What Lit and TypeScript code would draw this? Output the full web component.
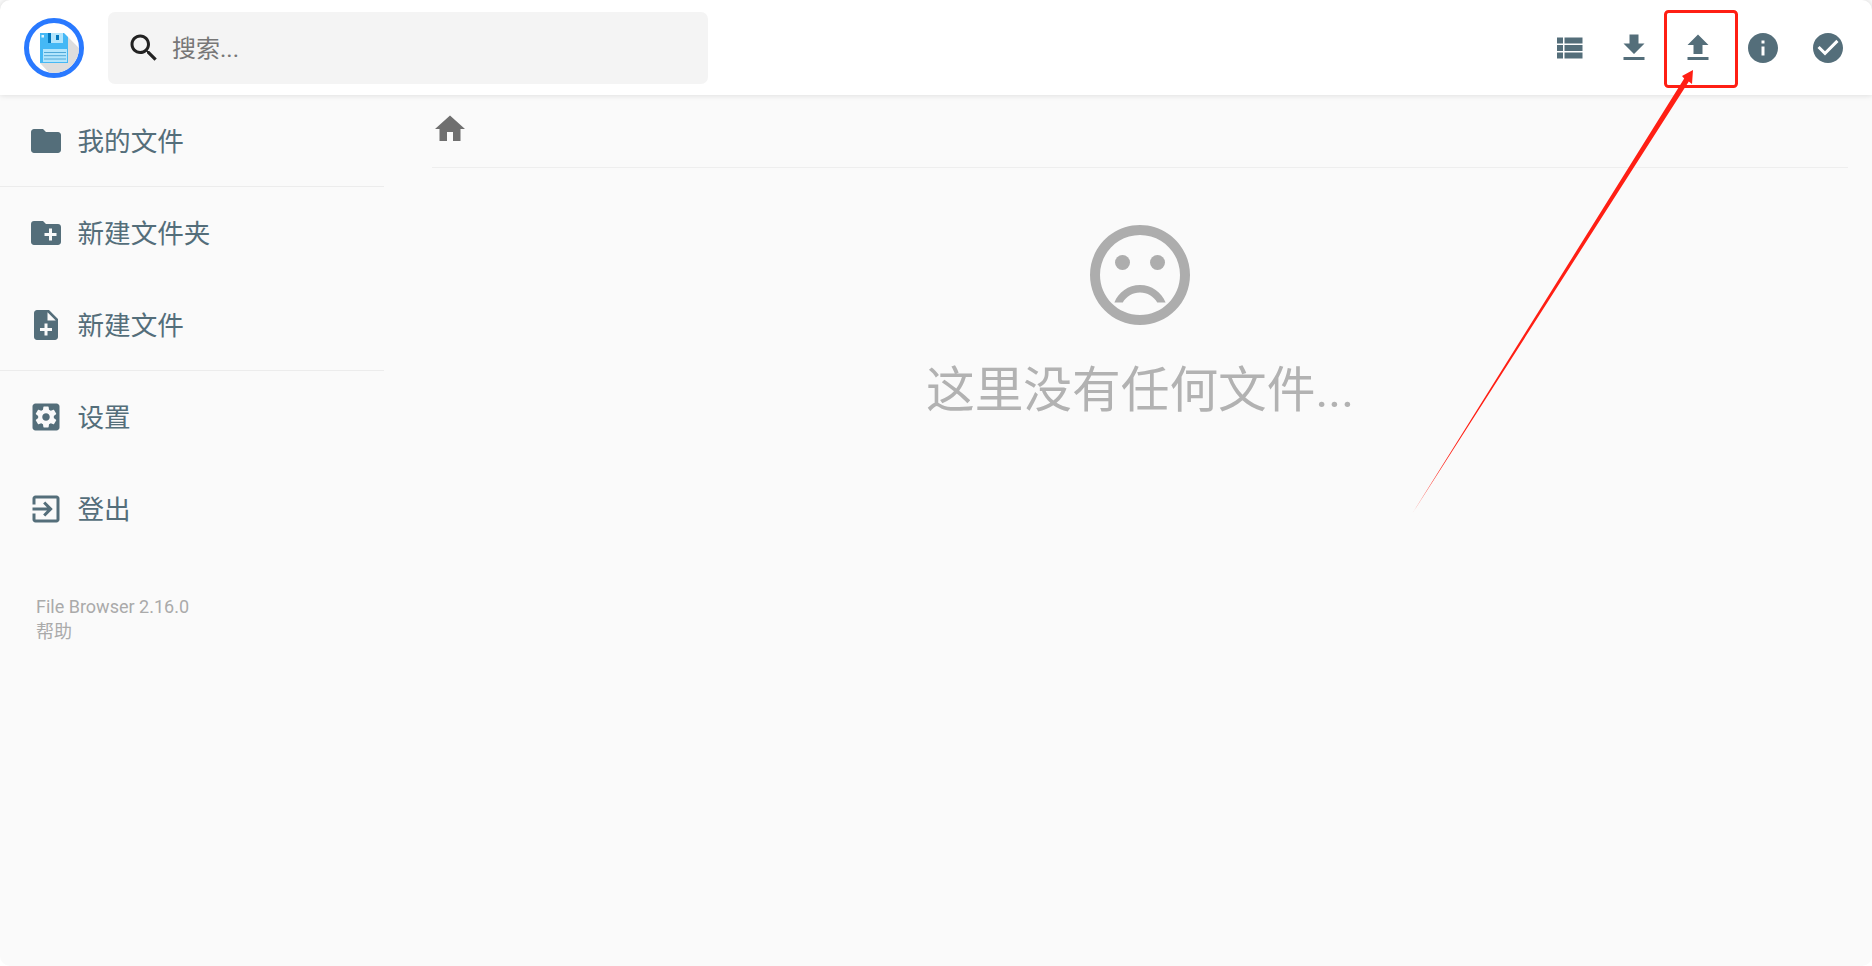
import { LitElement, html, css, svg } from "lit";
import { customElement } from "lit/decorators.js";

const ic = (body: unknown, cls = "") => html`<svg class="ic ${cls}" viewBox="0 0 24 24" fill="currentColor">${body}</svg>`;

const P = {
  search: svg`<path d="M15.5 14h-.79l-.28-.27C15.41 12.59 16 11.11 16 9.5 16 5.91 13.09 3 9.5 3S3 5.91 3 9.5 5.91 16 9.5 16c1.61 0 3.09-.59 4.23-1.57l.27.28v.79l5 4.99L20.49 19l-4.99-5zm-6 0C7.01 14 5 11.99 5 9.5S7.01 5 9.5 5 14 7.01 14 9.5 11.99 14 9.5 14z"/>`,
  list: svg`<path d="M4 14h4v-4H4v4zm0 5h4v-4H4v4zM4 9h4V5H4v4zm5 5h12v-4H9v4zm0 5h12v-4H9v4zM9 5v4h12V5H9z"/>`,
  down: svg`<path d="M19 9h-4V3H9v6H5l7 7 7-7zM5 18v2h14v-2H5z"/>`,
  up: svg`<path d="M9 16h6v-6h4l-7-7-7 7h4zm-4 2h14v2H5z"/>`,
  info: svg`<path d="M12 2C6.48 2 2 6.48 2 12s4.48 10 10 10 10-4.48 10-10S17.52 2 12 2zm1 15h-2v-6h2v6zm0-8h-2V7h2v2z"/>`,
  check: svg`<path d="M12 2C6.48 2 2 6.48 2 12s4.48 10 10 10 10-4.48 10-10S17.52 2 12 2zm-2 15l-5-5 1.41-1.41L10 14.17l7.59-7.59L19 8l-9 9z"/>`,
  folder: svg`<path d="M10 4H4c-1.1 0-1.99.9-1.99 2L2 18c0 1.1.9 2 2 2h16c1.1 0 2-.9 2-2V8c0-1.1-.9-2-2-2h-8l-2-2z"/>`,
  newFolder: svg`<path d="M20 6h-8l-2-2H4c-1.11 0-1.99.89-1.99 2L2 18c0 1.11.89 2 2 2h16c1.11 0 2-.89 2-2V8c0-1.11-.89-2-2-2zm-1 8h-3v3h-2v-3h-3v-2h3V9h2v3h3v2z"/>`,
  newFile: svg`<path d="M14 2H6c-1.1 0-1.99.9-1.99 2L4 20c0 1.1.89 2 1.99 2H18c1.1 0 2-.9 2-2V8l-6-6zm2 14h-3v3h-2v-3H8v-2h3v-3h2v3h3v2zm-3-7V3.5L18.5 9H13z"/>`,
  settings: svg`<path d="M19 3H5c-1.11 0-2 .9-2 2v14c0 1.1.89 2 2 2h14c1.11 0 2-.9 2-2V5c0-1.1-.89-2-2-2zm-1.75 9c0 .23-.02.46-.05.68l1.48 1.16c.13.11.17.3.08.45l-1.4 2.42c-.09.15-.27.21-.43.15l-1.74-.7c-.36.28-.76.51-1.18.69l-.26 1.85c-.03.17-.18.3-.35.3h-2.8c-.17 0-.32-.13-.35-.29l-.26-1.85c-.43-.18-.82-.41-1.18-.69l-1.74.7c-.16.06-.34 0-.43-.15l-1.4-2.42c-.09-.15-.05-.34.08-.45l1.48-1.16c-.03-.23-.05-.46-.05-.69 0-.23.02-.46.05-.68l-1.48-1.16c-.13-.11-.17-.3-.08-.45l1.4-2.42c.09-.15.27-.21.43-.15l1.74.7c.36-.28.76-.51 1.18-.69l.26-1.85c.03-.17.18-.3.35-.3h2.8c.17 0 .32.13.35.29l.26 1.85c.43.18.82.41 1.18.69l1.74-.7c.16-.06.34 0 .43.15l1.4 2.42c.09.15.05.34-.08.45l-1.48 1.16c.03.23.05.46.05.69zM12 9.500c-1.38 0-2.5 1.12-2.5 2.5s1.12 2.5 2.5 2.5 2.5-1.12 2.5-2.5-1.12-2.5-2.5-2.5z"/>`,
  logout: svg`<path d="M10.09 15.59L11.5 17l5-5-5-5-1.41 1.41L12.67 11H3v2h9.67l-2.58 2.59zM19 3H5c-1.11 0-2 .9-2 2v4h2V5h14v14H5v-4H3v4c0 1.1.89 2 2 2h14c1.1 0 2-.9 2-2V5c0-1.1-.9-2-2-2z"/>`,
  home: svg`<path d="M10 20v-6h4v6h5v-8h3L12 3 2 12h3v8z"/>`,
  sad: svg`<circle cx="15.5" cy="9.5" r="1.5"/><circle cx="8.5" cy="9.5" r="1.5"/><path d="M12 14c-2.33 0-4.32 1.45-5.12 3.5h1.67c.69-1.19 1.97-2 3.45-2s2.75.81 3.45 2h1.67c-.8-2.05-2.79-3.5-5.12-3.5zm-.01-12C6.47 2 2 6.48 2 12s4.47 10 9.99 10C17.52 22 22 17.52 22 12S17.52 2 11.99 2zM12 20c-4.42 0-8-3.58-8-8s3.58-8 8-8 8 3.58 8 8-3.58 8-8 8z"/>`,
};

@customElement("app-root")
export class AppRoot extends LitElement {
  static styles = css`
    :host {
      display: block;
      width: 1872px;
      height: 966px;
      overflow: hidden;
      position: relative;
      background: #fff;
      font-family: Roboto, "Noto Sans CJK SC", sans-serif;
      color: #546e7a;
    }
    * { box-sizing: border-box; }
    .frame { height: 966px; background: #fafafa; border-radius: 0 0 10px 10px; overflow: hidden; }
    .ic { width: 36px; height: 36px; display: block; flex: none; }
    header {
      height: 95px;
      background: #fff;
      display: flex;
      align-items: center;
      padding: 0 26px 0 24px;
      box-shadow: 0 0 6px rgba(0, 0, 0, 0.14);
      position: relative;
      border-radius: 10px 10px 0 0;
    }
    .logo { width: 60px; height: 60px; display: block; flex: none; }
    .search {
      margin-left: 24px;
      width: 600px;
      height: 72px;
      background: #f4f4f4;
      border-radius: 7px;
      display: flex;
      align-items: center;
      padding-left: 17.5px;
      gap: 10.5px;
      color: #222;
    }
    .search span { font-size: 24px; color: #777; padding-bottom: 2px; }
    .actions { margin-left: auto; display: flex; gap: 28.8px; }
    .body { display: flex; }
    nav { width: 384px; flex: none; }
    .item {
      height: 92px;
      display: flex;
      align-items: center;
      gap: 14px;
      padding-left: 27.5px;
      font-size: 26.6px;
    }
    .item span { padding-bottom: 3px; }
    .sep { border-bottom: 1px solid #ececec; }
    .foot { margin-top: 39px; padding-left: 36px; font-size: 18px; line-height: 25px; color: #aaa; }
    main { flex: 1; padding: 0 24px 0 48px; }
    .crumb { height: 73px; border-bottom: 1px solid #eee; color: #6f6f6f; padding-top: 16px; }
    .empty { display: flex; flex-direction: column; align-items: center; color: #b2b2b2; padding-top: 47px; }
    .empty .ic { width: 120px; height: 120px; color: #adadad; }
    .empty p { margin: 22px 0 0; font-size: 48.7px; line-height: 68px; font-weight: 400; }
    .mark { position: absolute; left: 0; top: 0; width: 1872px; height: 966px; pointer-events: none; }
  `;

  render() {
    return html`
      <div class="frame">
        <header>
          <svg class="logo" viewBox="0 0 60 60">
            <defs><clipPath id="disc"><circle cx="30" cy="30" r="25" /></clipPath></defs>
            <circle cx="30" cy="30" r="27.5" fill="#fff" stroke="#2979ff" stroke-width="5" />
            <path d="M44 19 L62 37 V62 H32 L16 45 H44Z" fill="#dddddd" clip-path="url(#disc)" />
            <path d="M16 15h24l4 4v26H16z" fill="#45b8f5" />
            <rect x="24" y="15" width="15" height="10" fill="#b3e5fc" />
            <rect x="24" y="15" width="3" height="10" fill="#0277bd" />
            <rect x="32" y="17" width="3" height="5" fill="#0277bd" />
            <rect x="19" y="31" width="24" height="13" fill="#b3e5fc" />
            <path d="M20 34.500h22M20 37.700h22M20 41h22" stroke="#4fa8d8" stroke-width="1" />
            <rect x="17.500" y="17" width="2.500" height="2.500" fill="#e1f5fe" />
          </svg>
          <div class="search">${ic(P.search)}<span>搜索...</span></div>
          <div class="actions">
            ${ic(P.list)}${ic(P.down)}${ic(P.up)}${ic(P.info)}${ic(P.check)}
          </div>
        </header>
        <div class="body">
          <nav>
            <div class="item sep">${ic(P.folder)}<span>我的文件</span></div>
            <div class="item">${ic(P.newFolder)}<span>新建文件夹</span></div>
            <div class="item sep">${ic(P.newFile)}<span>新建文件</span></div>
            <div class="item">${ic(P.settings)}<span>设置</span></div>
            <div class="item">${ic(P.logout)}<span>登出</span></div>
            <div class="foot">File Browser 2.16.0<br />帮助</div>
          </nav>
          <main>
            <div class="crumb">${ic(P.home)}</div>
            <div class="empty">${ic(P.sad)}<p>这里没有任何文件...</p></div>
          </main>
        </div>
      </div>
      <svg class="mark" viewBox="0 0 1872 966">
        <rect x="1665.500" y="11.500" width="71" height="75" rx="3" fill="none" stroke="#ff1f14" stroke-width="3" />
        <path d="M1412 514 L1684.200 78.500 L1682 76 L1693 70 L1692 84 L1688.800 81.500Z" fill="#ff1f14" />
      </svg>
    `;
  }
}
